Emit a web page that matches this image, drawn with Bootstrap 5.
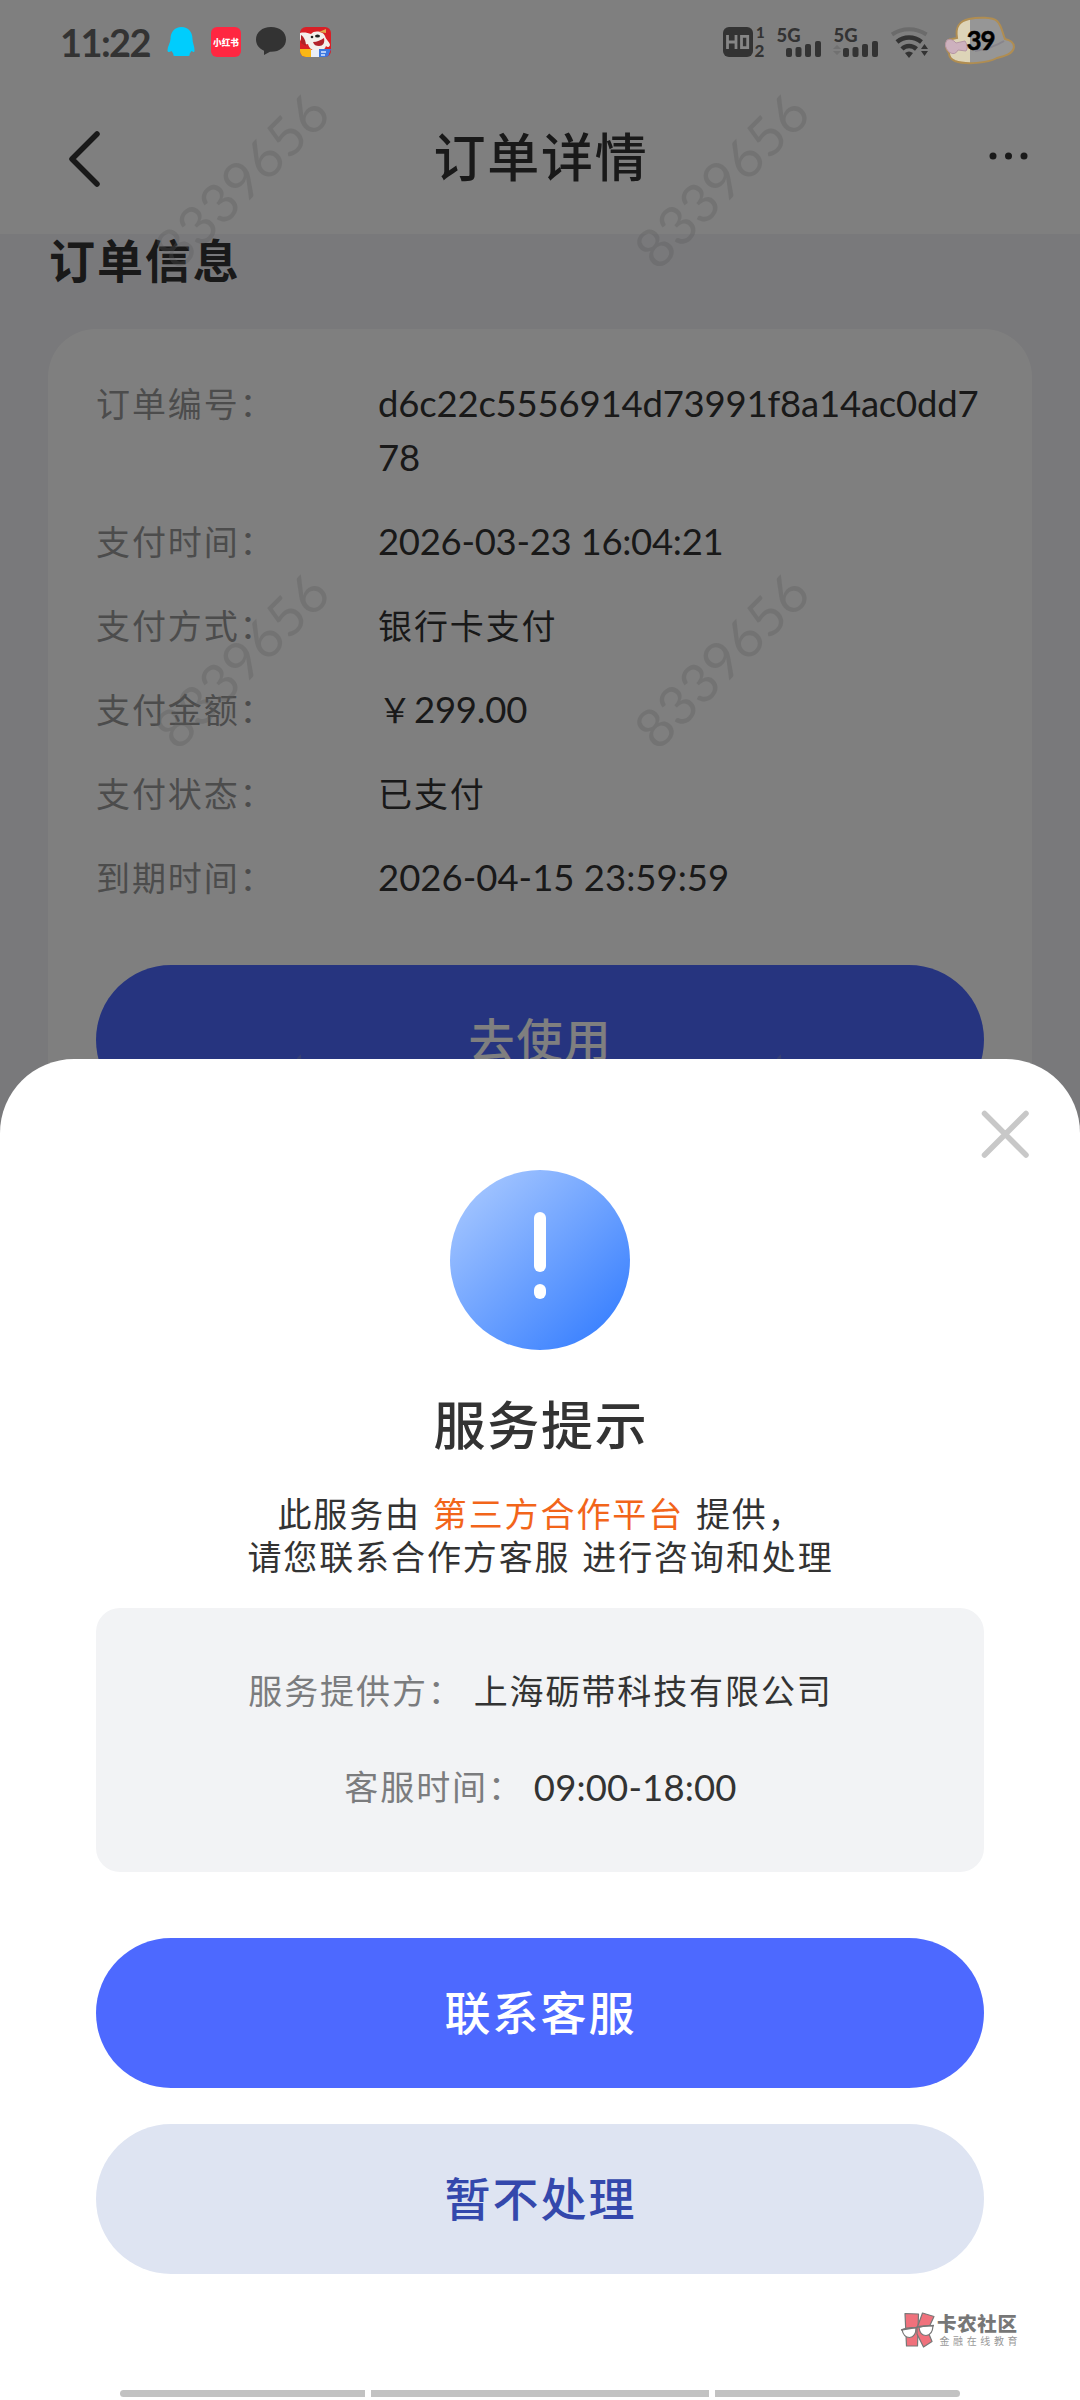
<!DOCTYPE html>
<html lang="zh-CN">
<head>
<meta charset="utf-8">
<meta name="viewport" content="width=device-width, initial-scale=1">
<title>订单详情</title>
<link href="https://cdn.jsdelivr.net/npm/bootstrap@5.3.0/dist/css/bootstrap.min.css" rel="stylesheet">
<style>
body{margin:0;background:#fff;font-family:"Lato","Noto Sans CJK SC",sans-serif;color:#333}
.screen{width:1080px;height:2400px;background:#f3f3f6}
.status{height:84px;z-index:5;padding:0 64px 0 59px}
.clock{font-size:38px;font-weight:700;line-height:82px;width:108px;letter-spacing:-1.6px;white-space:nowrap;padding-left:1px}
.titlebar{height:234px;background:#fff;padding:84px 51px 4px 66px}
.title-text{font-size:52px;font-weight:500;letter-spacing:1.8px;line-height:60px;padding-right:11px}
.section-title{font-size:46px;font-weight:700;letter-spacing:1.9px;line-height:54px;padding:0 0 0 49px;height:95px}
.order-card{margin:0 48px;border:0;border-radius:48px;padding:48px 48px 0;height:900px}
.info-row{font-size:34px;line-height:53.5px;letter-spacing:1.9px;margin-bottom:30.5px}
.info-label{width:282px;color:#999;flex:none}
.num{font-size:36.5px;letter-spacing:-.2px}
.num-date{letter-spacing:-.3px}
.num-due{letter-spacing:0}
.num-hours{letter-spacing:.15px}
.pill{height:150px;border-radius:75px;border:0;font-size:46px;font-weight:500;letter-spacing:2px;line-height:150px;padding:0 0 0 1px;width:100%}
.pill-main{background:#4d69ff;color:#fff}
.pill-soft{background:#dee4f2;color:#3448ac}
.pill-use{margin-top:30.500px}
.dim{background:rgba(0,0,0,.5);z-index:2}
.wm{z-index:3;left:0;top:0;pointer-events:none}
.sheet{top:1059px;z-index:4;border-radius:74px 74px 0 0;padding:111px 96px 0}
.sheet-x{top:47px;right:47px}
.sheet-title{font-size:52px;font-weight:500;letter-spacing:1.8px;line-height:60px;margin-top:45px;padding-left:2px}
.sheet-note{font-size:34px;letter-spacing:1.9px;word-spacing:1.2px;line-height:43px;margin-top:37px;padding-left:1px}
.hot{color:#f2651a}
.info-box{height:264px;border-radius:24px;background:#f2f3f5;margin-top:30px;padding:56px 0 0 1px;font-size:34px;letter-spacing:1.9px;line-height:54px}
.info-box .box-line{gap:10px;margin-bottom:42px}
.box-label{color:#7b7c7e}
.actions{margin-top:66px;gap:36px}
.brand{left:900px;top:1251px}
.homebar{left:120px;top:1331px;width:840px;gap:6px}
.homebar span{height:7px;background:#c2c2c2}
</style>
</head>
<body>
<div class="screen position-relative overflow-hidden">

  <header class="status position-absolute top-0 start-0 w-100 d-flex align-items-center">
    <div class="clock">11:22</div>
    <svg width="170" height="84" viewBox="167 0 170 84">
      <path d="M181.500 27c-7 0-11 5-11 12 0 4-3 7-3 11 0 3 2 2 4 1l2 3c-1 2 1 2 4 2h8c3 0 5 0 4-2l2-3c2 1 3 2 3-1 0-4-2-7-2-11 0-7-4-12-11-12z" fill="#00cdfd"/>
      <rect x="211" y="27" width="30" height="30" rx="6" fill="#ff2741"/>
      <text x="226" y="45.500" font-size="8.600" font-weight="900" fill="#fff" text-anchor="middle">小红书</text>
      <path d="M271 27c-9 0-15 5.500-15 12.500 0 5 3 9 8 11.200V55l6-3.200c9.500.4 16-5 16-12.300S280 27 271 27z" fill="#333"/>
      <g>
        <clipPath id="jd"><rect x="300" y="27" width="31" height="30" rx="6"/></clipPath>
        <g clip-path="url(#jd)">
          <rect x="300" y="27" width="31" height="30" fill="#d91f26"/>
          <path d="M300 33c4-1 8 0 11 1 3-4 12-3 14 2 1 4 5 6 5 9-1 3-3 2-4 1-1 4-5 5-9 5-5 0-8-3-9-7-4 1-7-2-8-5z" fill="#f4efec"/>
          <path d="M301 35c3 2 5 6 5 11l-5-3z" fill="#b12127"/>
          <circle cx="312" cy="37" r="1.300" fill="#222"/><ellipse cx="317.500" cy="36" rx="2.500" ry="1.500" fill="#222"/>
          <path d="M313 42c4 0 8-2 11-4 1 5-1 8-5 8-3 0-5-1-6-4z" fill="#b3222b"/>
          <path d="M319 32l7-3v4z" fill="#e2a74a"/>
          <rect x="300" y="49" width="11" height="8" fill="#fab715"/>
          <rect x="311" y="50" width="8" height="7" fill="#e9eef8"/>
          <path d="M319 49h12l-3 8h-9z" fill="#3b78e0"/>
          <path d="M321 52h5M321 55h4" stroke="#dbe7ff" stroke-width="1.300"/>
        </g>
      </g>
    </svg>
    <svg class="ms-auto" width="296" height="84" viewBox="720 0 296 84" fill="#333">
      <rect x="723" y="27" width="30" height="30" rx="6"/>
      <path d="M727.500 35v14M736 35v14M727.500 42h8.500M741.500 36.300h6.200v11.400h-6.200z" fill="none" stroke="#868686" stroke-width="2.800"/>
      <text x="756" y="38" font-size="15" font-weight="900">1</text>
      <text x="754.500" y="56.500" font-size="17" font-weight="900">2</text>
      <g id="sig">
        <text x="776.500" y="41.500" font-size="19.500" font-weight="900" textLength="24" lengthAdjust="spacingAndGlyphs">5G</text>
        <rect x="786" y="48" width="6" height="9" rx="2"/><rect x="795.500" y="47" width="6" height="10" rx="2"/><rect x="805" y="44" width="6" height="13" rx="2"/><rect x="815" y="41" width="6" height="16" rx="2"/>
      </g>
      <use href="#sig" x="57"/>
      <path d="M833 49l4-4 4 4zM833 51l4 4 4-4z" fill="#717171"/>
      <g fill="none" stroke-linecap="butt">
        <path d="M892 34.500c10-7 24-7 34.500 0" stroke="#6b6b6b" stroke-width="4"/>
        <path d="M897 42c7-6 17-6 24.500 0" stroke="#333" stroke-width="4.500"/>
        <path d="M902 49c4-4 10-4 14.500 0" stroke="#333" stroke-width="4.500"/>
      </g>
      <path d="M905 53q4-3 8 0l-4 5zM921 49l3.500-5 3.500 5zM921 51l3.500 5 3.500-5z"/>
      <path d="M957 38c-2-12 3-17 12-19 9-2 24-2 28 2 5 5 5 11 8 18 5 1 9 4 9 8-1 7-9 9-17 11-9 5-31 7-42 3-5-2-6-5-6-8-5-6-3-14 3-14z" fill="#969696"/>
      <path d="M957 38c-2-12 3-18 12-19h1v44c-6 0-11 0-15-2-5-2-6-5-6-8-5-6-3-14 3-14z" fill="#ddd4b8"/>
      <path d="M957 38c-2-12 3-17 12-19 9-2 24-2 28 2 5 5 5 11 8 18 5 1 9 4 9 8-1 7-9 9-17 11-9 5-31 7-42 3-5-2-6-5-6-8-5-6-3-14 3-14z" fill="none" stroke="#b08d51" stroke-width="2"/>
      <path d="M975 51q18-3 29-10" fill="none" stroke="#88858c" stroke-width="2"/>
      <path d="M947 40q5-2 9 3l9-2q4 6 1 10l-8-1q-3 6-9 2-6-6-2-12z" fill="#cdb1be" stroke="#b697a5"/>
      <text x="966.500" y="50" font-size="26" font-weight="700" fill="#000" stroke="#000" stroke-width=".5" textLength="29">39</text>
    </svg>
  </header>

  <nav class="titlebar d-flex align-items-center justify-content-between">
    <svg width="38" height="60" viewBox="0 0 38 60" fill="none" stroke="#333" stroke-width="5.500" stroke-linecap="round" stroke-linejoin="round"><path d="M31 7L6 32l25 25"/></svg>
    <div class="title-text">订单详情</div>
    <svg width="40" height="60" viewBox="0 0 40 60" fill="#333"><circle cx="4" cy="29" r="3.500"/><circle cx="19.500" cy="29" r="3.500"/><circle cx="35" cy="29" r="3.500"/></svg>
  </nav>

  <h2 class="section-title m-0">订单信息</h2>

  <section class="card order-card">
    <div class="info-row d-flex"><span class="info-label">订单编号：</span><span><span class="num">d6c22c5556914d73991f8a14ac0dd7</span><br><span class="num">78</span></span></div>
    <div class="info-row d-flex"><span class="info-label">支付时间：</span><span class="num num-date">2026-03-23 16:04:21</span></div>
    <div class="info-row d-flex"><span class="info-label">支付方式：</span><span>银行卡支付</span></div>
    <div class="info-row d-flex"><span class="info-label">支付金额：</span><span>￥<span class="num">299.00</span></span></div>
    <div class="info-row d-flex"><span class="info-label">支付状态：</span><span>已支付</span></div>
    <div class="info-row d-flex"><span class="info-label">到期时间：</span><span class="num num-due">2026-04-15 23:59:59</span></div>
    <button class="btn pill pill-main pill-use" type="button">去使用</button>
  </section>

  <div class="dim position-absolute top-0 start-0 w-100 h-100"></div>
  <svg class="wm position-absolute" width="1080" height="1200" viewBox="0 0 1080 1200" fill="#5a5a5a" fill-opacity=".3" font-size="54" text-anchor="middle">
    <g id="wmrow">
      <text transform="translate(242 181) rotate(-45)" y="19" textLength="220">8339656</text>
      <text transform="translate(722 181) rotate(-45)" y="19" textLength="220">8339656</text>
    </g>
    <use href="#wmrow" y="480"/>
    <use href="#wmrow" y="960"/>
  </svg>

  <section class="sheet position-absolute start-0 bottom-0 w-100 bg-white text-center">
    <svg class="sheet-x position-absolute" width="56" height="56" viewBox="0 0 56 56" stroke="#c8c8c8" stroke-width="5.500" stroke-linecap="round"><path d="M7.500 7.500L49 49M49 7.500L7.500 49"/></svg>
    <svg class="d-block mx-auto" width="180" height="180" viewBox="0 0 180 180">
      <defs><linearGradient id="g" x1=".1" y1=".1" x2=".85" y2=".9"><stop offset="0" stop-color="#a3c5ff"/><stop offset="1" stop-color="#3c82ff"/></linearGradient></defs>
      <circle cx="90" cy="90" r="90" fill="url(#g)"/>
      <rect x="84" y="42" width="12" height="60" rx="6" fill="#fff"/><rect x="84" y="114" width="12" height="15" rx="6" fill="#fff"/>
    </svg>
    <div class="sheet-title">服务提示</div>
    <div class="sheet-note">此服务由 <span class="hot">第三方合作平台</span> 提供，<br>请您联系合作方客服 进行咨询和处理</div>
    <div class="info-box">
      <div class="box-line d-flex justify-content-center"><span class="box-label">服务提供方：</span><span>上海砺带科技有限公司</span></div>
      <div class="box-line d-flex justify-content-center"><span class="box-label">客服时间：</span><span class="num num-hours">09:00-18:00</span></div>
    </div>
    <div class="actions d-flex flex-column">
      <button class="btn pill pill-main" type="button">联系客服</button>
      <button class="btn pill pill-soft" type="button">暂不处理</button>
    </div>
    <svg class="brand position-absolute" width="122" height="40" viewBox="900 2310 122 40">
      <g fill="#f0717c" stroke="#777" stroke-width="1.200" stroke-linejoin="round"><path d="M905 2313.500l13.500.5-1 32h-11z"/><path d="M922.500 2313l11.500 3.500-6.500 14 4.500 11-8.500 5.500-6.500-13v-6z"/></g>
      <g fill="#fff" stroke="#777" stroke-width="1.200"><path d="M902 2329.500q7-2.500 14-1.500 0 9-6.500 9.500-6 0-7.500-8z"/><path d="M919 2327.500q7-2.500 14-1.500-.5 9-7 9.500-6 0-7-8z"/></g>
      <path d="M901 2330l15-2.500 3-1 15-1" fill="none" stroke="#777" stroke-width="1.500"/>
      <text x="937" y="2331" font-size="19.500" font-weight="900" fill="#777" textLength="80">卡农社区</text>
      <text x="939.500" y="2345" font-size="10" fill="#999" textLength="78">金融在线教育</text>
    </svg>
    <div class="homebar position-absolute d-flex"><span class="rounded-start-pill" style="width:245px"></span><span style="width:338px"></span><span class="rounded-end-pill" style="width:245px"></span></div>
  </section>
</div>
<script src="https://cdn.jsdelivr.net/npm/bootstrap@5.3.0/dist/js/bootstrap.bundle.min.js"></script>
</body>
</html>
